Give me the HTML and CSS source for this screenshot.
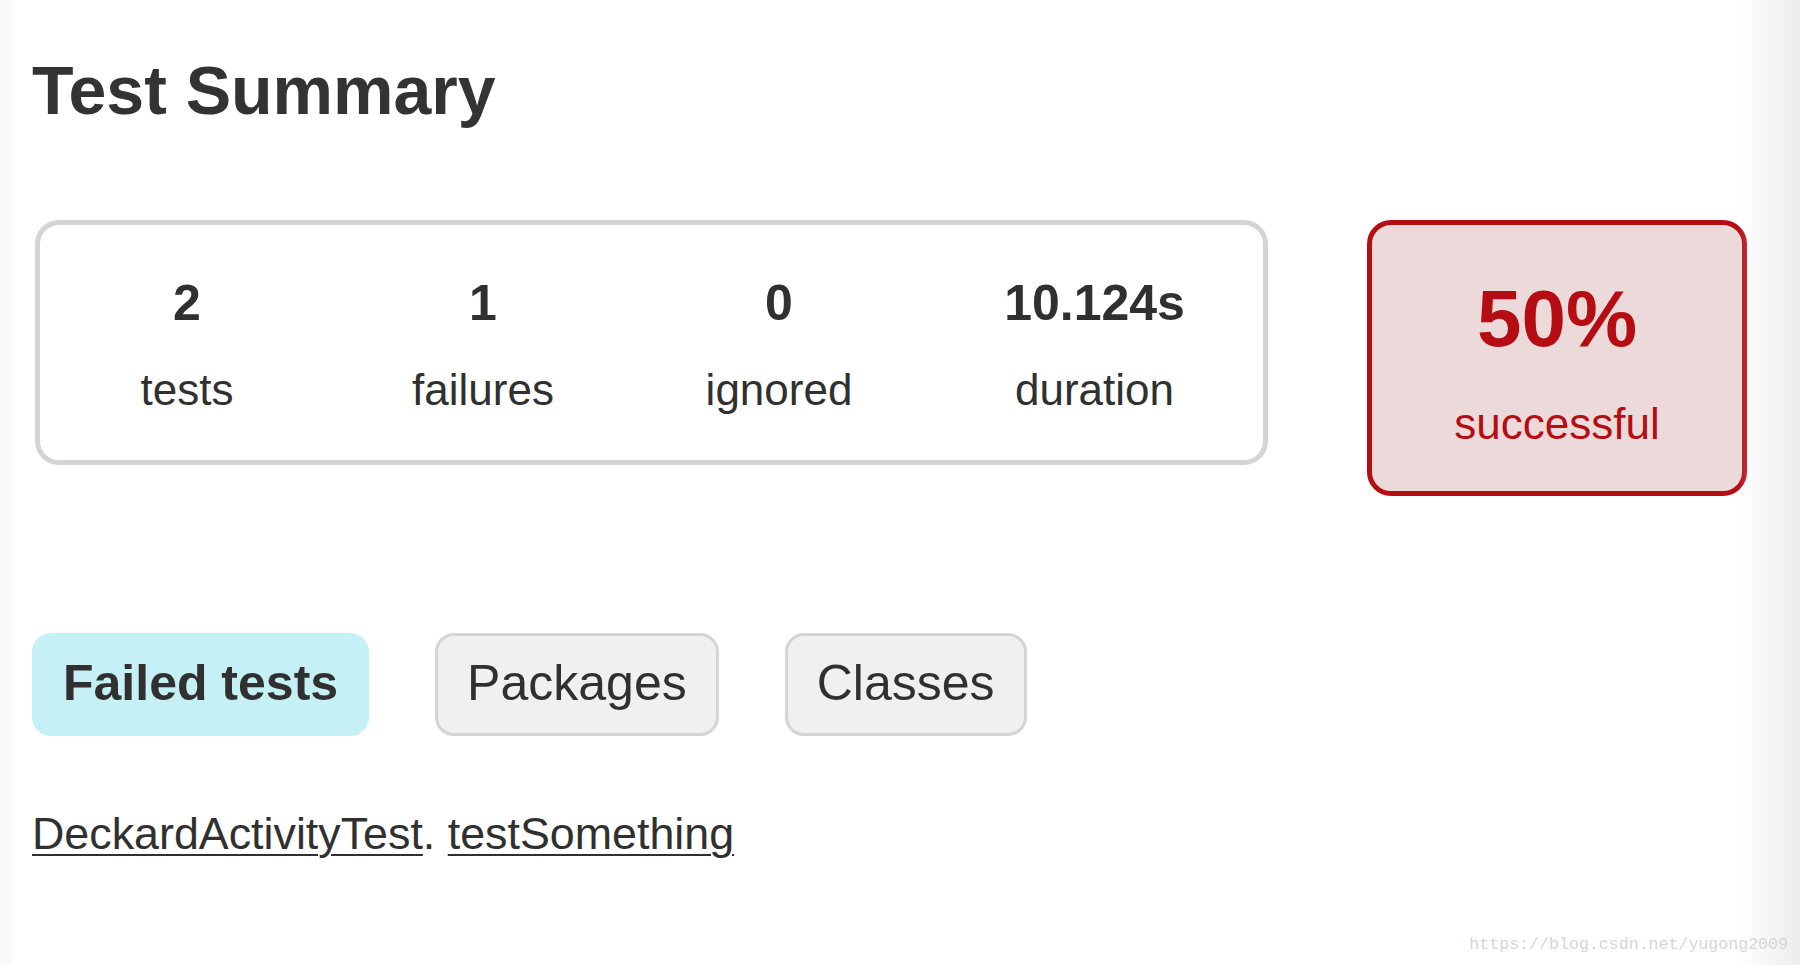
FILE: index.html
```html
<!DOCTYPE html>
<html lang="en">
<head>
<meta charset="utf-8">
<title>Test Summary</title>
<link rel="stylesheet" href="styles.css">
</head>
<body>
<div class="edge-left"></div>
<div class="content">
  <h1 class="title">Test Summary</h1>
  <div class="summary">
    <div class="summary-group">
      <div class="info-box">
        <div class="counter">2</div>
        <p class="label">tests</p>
      </div>
      <div class="info-box">
        <div class="counter">1</div>
        <p class="label">failures</p>
      </div>
      <div class="info-box">
        <div class="counter">0</div>
        <p class="label">ignored</p>
      </div>
      <div class="info-box">
        <div class="counter">10.124s</div>
        <p class="label">duration</p>
      </div>
    </div>
    <div class="success-rate failures">
      <div class="percent">50%</div>
      <p class="label">successful</p>
    </div>
  </div>
  <ul class="tab-links">
    <li class="tab selected">Failed tests</li>
    <li class="tab">Packages</li>
    <li class="tab">Classes</li>
  </ul>
  <p class="failed-list"><a href="#" class="link">DeckardActivityTest</a>. <a href="#" class="link">testSomething</a></p>
</div>
<div class="edge-right"></div>
<div class="watermark">https://blog.csdn.net/yugong2009</div>
</body>
</html>
```

FILE: styles.css
```css
html, body {
  margin: 0;
  padding: 0;
  height: 100%;
}
body {
  font-family: "Liberation Sans", Arial, sans-serif;
  color: #303030;
  background: #ffffff;
  overflow: hidden;
  position: relative;
  width: 1800px;
  height: 965px;
}
.edge-left {
  position: absolute;
  left: 0;
  top: 0;
  width: 12px;
  height: 100%;
  background: #f9f9f9;
}
.edge-right {
  position: absolute;
  right: 0;
  top: 0;
  width: 62px;
  height: 100%;
  background: linear-gradient(to right, rgba(236,236,236,0) 0%, #ededed 100%);
  pointer-events: none;
}
.content {
  position: relative;
  padding-left: 32px;
}
.title {
  margin: 0;
  padding-top: 50px;
  font-size: 68px;
  line-height: 80px;
  font-weight: bold;
  color: #333333;
}
.summary {
  display: flex;
  align-items: flex-start;
  margin-top: 90px;
}
.summary-group {
  margin-left: 3px;
  width: 1233px;
  height: 245px;
  box-sizing: border-box;
  border: 5px solid #d4d4d4;
  border-radius: 24px;
  padding-top: 48px;
  display: grid;
  grid-template-columns: 294px 298px 294px 1fr;
}
.info-box {
  text-align: center;
}
.counter {
  font-size: 50px;
  line-height: 60px;
  font-weight: bold;
}
.label {
  margin: 32px 0 0 0;
  font-size: 44px;
  line-height: 50px;
}
.success-rate {
  margin-left: 99px;
  width: 380px;
  height: 276px;
  box-sizing: border-box;
  border: 5px solid #b60d14;
  border-radius: 24px;
  background: #ecdada;
  padding-top: 48px;
  text-align: center;
  color: #b60d14;
}
.percent {
  font-size: 80px;
  line-height: 92px;
  font-weight: bold;
}
.success-rate .label {
  margin-top: 34px;
}
.tab-links {
  list-style: none;
  margin: 137px 0 0 0;
  padding: 0;
  display: flex;
}
.tab {
  font-size: 50px;
  line-height: 60px;
  padding: 17px 29px 20px 29px;
  border: 3px solid #d4d4d4;
  border-radius: 19px;
  background: #f0f0f0;
  margin-right: 66px;
  color: #303030;
}
.tab.selected {
  background: #c5f0f5;
  border-color: #c5f0f5;
  font-weight: bold;
  padding-left: 28px;
  padding-right: 28px;
}
.failed-list {
  margin: 72px 0 0 0;
  font-size: 44.8px;
  line-height: 50px;
}
.link {
  color: #303030;
  text-decoration: underline;
  text-decoration-thickness: 2px;
  text-underline-offset: 5px;
}
.watermark {
  position: absolute;
  right: 12px;
  bottom: 10px;
  font-family: "Liberation Mono", "DejaVu Sans Mono", monospace;
  font-size: 16.6px;
  line-height: 20px;
  color: #d6d6d6;
}
```
